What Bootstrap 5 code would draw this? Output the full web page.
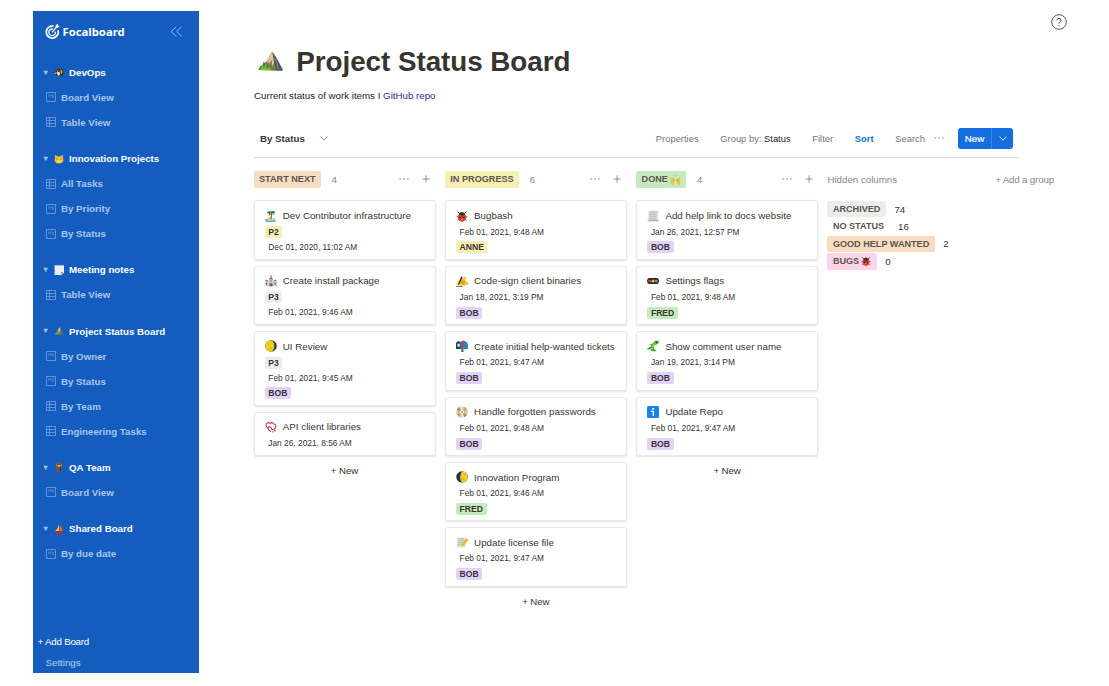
<!DOCTYPE html>
<html lang="en">
<head>
  <meta charset="UTF-8" />
  <title>Focalboard</title>
  <link href="https://cdn.jsdelivr.net/npm/bootstrap@5.3.3/dist/css/bootstrap.min.css" rel="stylesheet" />
  <style>
    body { font-family: "Liberation Sans", Arial, sans-serif; font-size: 9.73px; line-height: 15px; color: #37352f; padding: 11px 0 13px 33px; }
    svg { display: block; flex: none; }

    /* sidebar */
    .sidebar { width: 165.5px; background: #145dbf; color: #fff; }
    .brand { height: 20px; margin-top: 10.5px; padding: 0 16px 0 12px; }
    .brand-name { font: bold 11.3px/20px "Noto Sans", sans-serif; margin-left: 2.5px; }
    .board-list { margin-top: 18.4px; }
    .board-group { margin-bottom: 11.2px; }
    .board-title, .board-view { height: 25.02px; font-weight: bold; white-space: nowrap; }
    .board-title { padding-left: 10px; }
    .board-title .emoji { width: 10px; height: 10px; margin: 0 5px 0 5.5px; }
    .board-view { padding-left: 12.5px; color: #a9c5ec; }
    .board-view svg { width: 10px; height: 10px; margin-right: 5.5px; color: #6f9ddb; }
    .add-board { padding-left: 4.5px; height: 23px; letter-spacing: -.2px; }
    .settings { padding-left: 12.5px; height: 20.5px; color: #b7ceee; }

    /* page head */
    .help-row { height: 22px; padding-right: 42.5px; }
    .content-area { padding-left: 55.5px; }
    .board-head { width: 765px; }
    .page-title { height: 34px; margin-top: 11.6px; }
    .page-title svg { margin-left: 3px; }
    .page-title h1 { font-size: 27.8px; line-height: 34px; font-weight: bold; margin-left: 12.3px; letter-spacing: -.04px; }
    .about { margin-top: 9.5px; height: 15px; color: #222; }
    .about a { color: #4b11a0; }
    .toolbar { height: 38px; margin-top: 16.9px; border-bottom: 1px solid #dcdcdb; font-size: 9.4px; color: #777672; padding: 0 6px; }
    .view-name { font-size: 9.73px; color: #37352f; }
    .chev-view { margin-left: 15px; }
    .tool { margin-left: 21.7px; }
    .tool-dots { margin-left: 9px; margin-right: 14px; }
    .btn-new { width: 55px; height: 21px; background: #166de0; color: #fff; border-radius: 3px; overflow: hidden; }
    .btn-new span { width: 34px; border-right: 1px solid #3c84e6; line-height: 21px; font-size: 9.73px; -webkit-text-stroke: .2px #fff; }
    .sort { color: #0a76d0; }

    /* board */
    .board { gap: 9.3px; margin-top: 12px; margin-left: -.5px; }
    .lane { width: 182px; }
    .lane-head { height: 19px; margin-bottom: 11.5px; color: #888784; }
    .lane-count { margin-left: 10.5px; }
    .lane-plus { margin-left: 13px; margin-right: 5.5px; }
    .label-chip { height: 17px; line-height: 17px; padding: 0 5.5px; border-radius: 2px; font-weight: bold; font-size: 9.15px; color: #5a564c; white-space: nowrap; }
    .chip-emoji { margin-left: 2px; }
    .task { border: 1px solid #e8e8e8; border-radius: 2.5px; box-shadow: 0 1px 2px rgba(0, 0, 0, .12); margin-bottom: 6px; padding: 5.2px 4px 3.8px 10.3px; background: #fff; }
    .task-name { height: 17.8px; font-size: 9.78px; white-space: nowrap; }
    .task-name svg { width: 12px; height: 12px; margin-right: 6px; }
    .prop { height: 15.3px; font-size: 8.36px; }
    .prop-date { padding-left: 3.5px; color: #333; }
    .tag-chip { height: 12px; line-height: 12px; padding: 0 3.5px; border-radius: 2px; font-weight: bold; font-size: 8.6px; }
    .add-task { height: 17px; line-height: 17px; color: #333; letter-spacing: -.1px; }
    .bg-orange-soft { background: #f8dcc1; }
    .bg-yellow-soft { background: #f7eeb4; }
    .bg-green-soft { background: #c6eac0; }
    .bg-purple-soft { background: #e3d0fb; }
    .bg-gray-soft { background: #ececec; }
    .bg-pink-soft { background: #ffd3e8; }
    .hidden-lane { width: 226.5px; }
    .add-group { letter-spacing: -.17px; }
    .hidden-row { height: 17.4px; color: #333; }
    .hidden-row .label-chip { height: 16.5px; line-height: 16.5px; margin-right: 8.5px; font-size: 9.1px; }
  </style>
</head>
<body class="vh-100 overflow-hidden bg-white">

  <!-- icon sprite -->
  <svg width="0" height="0" class="position-absolute">
    <symbol id="i-board" viewBox="0 0 10 10"><path d="M.5.5h9v9h-9zM3 2.400v2.600M5 2.400v1.900M7 2.400v3.600" fill="none" stroke="currentColor" stroke-width=".85"/></symbol>
    <symbol id="i-table" viewBox="0 0 10 10"><path d="M.5.5h9v9h-9zM.5 3.500h9M.5 6.500h9M3.500.5v9" fill="none" stroke="currentColor" stroke-width=".85"/></symbol>
    <symbol id="i-tri" viewBox="0 0 6 6"><path d="M.4.8h5.2L3 5.6z" fill="#9fbde9"/></symbol>
    <symbol id="i-dots" viewBox="0 0 10 4"><path d="M.5 2h1.4M4.3 2h1.4M8.1 2h1.4" stroke="#777" stroke-width="1.2"/></symbol>
    <symbol id="i-plus" viewBox="0 0 8 8"><path d="M4 .4v7.2M.4 4h7.2" stroke="#777" stroke-width=".8"/></symbol>
    <symbol id="i-chev" viewBox="0 0 8 5"><path d="M.7.8 4 4.1 7.3.8" fill="none" stroke="currentColor" stroke-width=".9"/></symbol>

    <symbol id="e-camp" viewBox="0 0 28 22"><path d="M2 20 8 12l2-1 5-10 2 1 3 5 6 11 1 2z" fill="#8d7459"/><path d="m15 1-5 10 3 2 2-4 1 7 4-8-3-6z" fill="#e8c794"/><path d="m16 1 4 6 7 13h-7l-2-7-1-5z" fill="#4d5360"/><path d="m18 7 3 6 1 6M12 9l-2 8" stroke="#8598b3" fill="none"/><path d="m1 20 3-5 1 1 2-5 2 4 2-2 2 5 3-1 3 3 6-1 2 2z" fill="#438b2c"/><path d="m3 20 3-5 1 3 2-5 1 5 3-1 2 3z" fill="#78b83d"/></symbol>
    <symbol id="e-dog" viewBox="0 0 16 16"><path d="M0 10 4 5q5-5 10-1 3 5 0 9l-3 1-5-1-5-1z" fill="#3d2b25"/><path d="M5 6h3l2 6-3 2-2-3z" fill="#eee4d5"/><path d="M10 4q4 0 4 5l-3 3z" fill="#c78a45"/><circle cx="7" cy="7" r="1.100" fill="#111"/><path d="m0 10 4-2v3H1z" fill="#eba345"/></symbol>
    <symbol id="e-cat" viewBox="0 0 16 16"><path d="m2 1 4 3h4l4-3 1 10q-2 4-7 4t-7-4z" fill="#f8c630"/><path d="m3 3 2 2-2 1zm10 0-2 2 2 1z" fill="#e9803c"/><circle cx="5" cy="8" r=".9" fill="#7b5a12"/><circle cx="11" cy="8" r=".9" fill="#7b5a12"/><path d="M5 12q3-3 6 0-3 2-6 0" fill="#ffe79a"/></symbol>
    <symbol id="e-note" viewBox="0 0 16 16"><path d="M1 0h15v12l-4 4H1z" fill="#e9edf0"/><path d="M1 0h15v1.500H1z" fill="#aab3bb"/><path d="M11 15v-4h4z" fill="#89929b"/></symbol>
    <symbol id="e-owl" viewBox="0 0 16 16"><path d="M4 1h7l2 5-1 7-3 3H6L3 11z" fill="#875536"/><path d="M4 3h8v3L8 8 4 6z" fill="#d5a36f"/><circle cx="6" cy="4" r="1.2" fill="#222"/><circle cx="10" cy="4" r="1.2" fill="#222"/><path d="M9 8h3l-1 5-2 2z" fill="#57321f"/></symbol>
    <symbol id="e-boat" viewBox="0 0 16 16"><path d="M8 0v11H2Q7 7 8 0" fill="#f8c231"/><path d="M9 2q5 5 5 9H9z" fill="#ef6a27"/><path d="M1 12h14l-3 4H4z" fill="#c62a21"/></symbol>
    <symbol id="e-island" viewBox="0 0 16 16"><path d="M0 12h14v4H1z" fill="#48c4df"/><path d="M2 11q5-3 11 1l-2 2H4z" fill="#f2cf78"/><path d="m8 4-1 8 2 .2L9.5 4" fill="#9a6538"/><path d="M2 5Q4 0 8 2q5-3 6 3l-3-1 1 4-3-4-4 4V4z" fill="#32903a"/></symbol>
    <symbol id="e-castle" viewBox="0 0 16 16"><path d="M0 8h5V6h6v2h5v7H0z" fill="#c9ccd4"/><path d="m5 6 3-4 3 4zM0 8l2-2 3 2zM11 8l3-2 2 2z" fill="#6d7785"/><path d="M8 0v3" stroke="#c33"/><path d="M6 11h4v4H6z" fill="#9b493e"/><path d="M2 10v3M13.5 10v3M8 7v2" stroke="#714e6e" stroke-width="1.3"/></symbol>
    <symbol id="e-moon" viewBox="0 0 16 16"><circle cx="8" cy="8" r="7.7" fill="#27364b"/><path d="M8 .3a7.7 7.7 0 0 0 0 15.4q4.500-2 4.500-7.700T8 .3" fill="#f8cb19"/><circle cx="5" cy="5" r="1.5" fill="#e8b913"/><circle cx="7" cy="11" r="1.8" fill="#e8b913"/></symbol>
    <symbol id="e-moon2" viewBox="0 0 16 16"><circle cx="8" cy="8" r="7.7" fill="#22344e"/><path d="M8 .3a7.7 7.7 0 0 1 0 15.4Q5 12 5.5 8T8 .3" fill="#f8cb2a"/><circle cx="11" cy="5" r="1.4" fill="#e8b913"/><circle cx="9" cy="11" r="1.6" fill="#e8b913"/></symbol>
    <symbol id="e-horn" viewBox="0 0 16 16"><path d="M4 9Q0 7 2 4t5-1q3-2 5 1 4 1 2 5-1 3-5 2-1-4-4-3-2 2 0 4l3 2" fill="none" stroke="#c4314b" stroke-width="1.4"/><path d="M10 14h5l-2-3z" fill="#a9895f"/><path d="m9 14 2 1" stroke="#555"/></symbol>
    <symbol id="e-bug" viewBox="0 0 16 16"><path d="m2 2 3 3M14 2l-3 3M1 9h14M2 14l3-3M14 14l-3-3" stroke="#4a2b23" stroke-width="1.2"/><ellipse cx="8" cy="9.5" rx="5.5" ry="6" fill="#d8432a"/><path d="M4 5q4-5 8 0l-1 2H5z" fill="#38302f"/><path d="M8 6v9" stroke="#5a1711" stroke-width=".7"/><circle cx="5.5" cy="10" r="1.1" fill="#3c1a16"/><circle cx="10.5" cy="10" r="1.1" fill="#3c1a16"/><circle cx="8" cy="12.5" r="1.2" fill="#e99b45"/></symbol>
    <symbol id="e-write" viewBox="0 0 16 16"><path d="M1 12 3 8l5-2 4-4 2 1-2 4 4 3v3l-5 1H3z" fill="#fbc02c"/><path d="m6 8 6 1-5 1 4 1.500-4 .5" fill="none" stroke="#c5830d" stroke-width=".8"/><path d="M7 1.500 4 9l-2 5 3-3 4-8z" fill="#3b3530"/><path d="M0 15.200h9" stroke="#444"/></symbol>
    <symbol id="e-mailbox" viewBox="0 0 16 16"><path d="M7 10h3v6H7z" fill="#7a5b43"/><path d="M1 3q2-2 4-1h8q3 1 3 5v5H1z" fill="#2a85b8"/><path d="M0 12V5q0-3 3-3t3 3v7z" fill="#243f5c"/><path d="M2 5h3v4H2z" fill="#e7edf0"/><path d="M8 1h4v3h-2v5H8z" fill="#dd3834"/></symbol>
    <symbol id="e-disc" viewBox="0 0 16 16"><circle cx="8" cy="8" r="7.5" fill="#d7c4a1"/><path d="m8 8-7-3 3-4zM8 8l7 4-4 3z" fill="#8d9867"/><path d="m8 8 4-7 3 4zM8 8l-4 7-3-4z" fill="#dba052"/><path d="M8 8 5 .7h4zM8 8l3 7H7z" fill="#eee7d7"/><circle cx="8" cy="8" r="2.6" fill="#fff"/><circle cx="8" cy="8" r="1.2" fill="#b57d60"/></symbol>
    <symbol id="e-memo" viewBox="0 0 16 16"><path d="M1 2h12v13H1z" fill="#dcdfe2"/><path d="M3 4h8M3 6.500h7M3 9h5M3 11.500h3" stroke="#9da3a8" stroke-width=".9"/><path d="m7 11 6-7 3 2-6 7-3 1z" fill="#f3b522"/><path d="m13 4 1-1 2 2v1z" fill="#e46c75"/></symbol>
    <symbol id="e-scroll" viewBox="0 0 16 16"><path d="M2 1h13l-1 11 1 3H0l2-3z" fill="#d2d4d5"/><path d="M4 3.500h8M4 6h8M4 8.500h8M4 11h7" stroke="#bcbfc1" stroke-width=".9"/><path d="M0 15q3 0 3-2h12v2z" fill="#aeb1b3"/></symbol>
    <symbol id="e-light" viewBox="0 0 16 16"><rect x=".2" y="4" width="15.6" height="8" rx="3" fill="#27262a"/><circle cx="3.7" cy="8" r="2" fill="#e43a31"/><circle cx="8" cy="8" r="2" fill="#f3bd2d"/><circle cx="12.3" cy="8" r="2" fill="#36b852"/></symbol>
    <symbol id="e-lizard" viewBox="0 0 16 16"><path d="M16 1h-5L7 5 4 6l2 2-5 3-1 2 5-1 1 3h7l-4-4 1-4 5-2z" fill="#3fa231"/><path d="m7 6 6-4-4 6-1 4-5 1 4-3z" fill="#8fd851"/><circle cx="12.5" cy="3" r=".9" fill="#163d14"/></symbol>
    <symbol id="e-info" viewBox="0 0 16 16"><rect width="16" height="16" rx="2" fill="#1683ec"/><circle cx="8.200" cy="3.800" r="1.500" fill="#fff"/><path d="M5 7.200h3.400v6" fill="none" stroke="#fff" stroke-width="1.700"/></symbol>
    <symbol id="e-hands" viewBox="0 0 16 16"><path d="M1 5l2 1 2-1 1 6-1 5H2l-1-4zM15 5l-2 1-2-1-1 6 1 5h3l1-4z" fill="#f6c12f"/><path d="m5 6 2 3-2 3zm6 0-2 3 2 3z" fill="#e39d21"/><path d="m4 2 1 1M8 1v2M12 2l-1 1" stroke="#9db68a" stroke-width="1.2"/></symbol>
  </svg>

  <div class="d-flex h-100">
    <aside class="sidebar d-flex flex-column flex-shrink-0">
      <div class="brand d-flex align-items-center">
        <svg width="15" height="17" viewBox="0 0 15 17" fill="none" stroke="#fff"><path d="M8.500 3.200A6 6 0 1 0 13 7.300" stroke-width="1.800"/><path d="M7.800 6.100a3.300 3.300 0 1 0 2.500 2.500" stroke-width="1.300"/><path d="M7 9.300 12.300 3" stroke-width="1.200"/><path d="m10.500 4.800.2-2.200 2-2 .3 1.900 1.700.4-2 2z" fill="#fff" stroke="none"/></svg>
        <span class="brand-name">Focalboard</span>
        <svg class="ms-auto" width="13" height="11" viewBox="0 0 13 11" fill="none" stroke="#a9c5ec" stroke-width=".9"><path d="M6.300.6 1.200 5.500l5.100 4.900M11.800.6 6.700 5.500l5.100 4.900"/></svg>
      </div>

      <div class="board-list">
        <div class="board-group">
          <div class="board-title d-flex align-items-center"><svg width="5.500" height="5.500"><use href="#i-tri"/></svg><svg class="emoji"><use href="#e-dog"/></svg>DevOps</div>
          <div class="board-view d-flex align-items-center"><svg><use href="#i-board"/></svg>Board View</div>
          <div class="board-view d-flex align-items-center"><svg><use href="#i-table"/></svg>Table View</div>
        </div>
        <div class="board-group">
          <div class="board-title d-flex align-items-center"><svg width="5.500" height="5.500"><use href="#i-tri"/></svg><svg class="emoji"><use href="#e-cat"/></svg>Innovation Projects</div>
          <div class="board-view d-flex align-items-center"><svg><use href="#i-table"/></svg>All Tasks</div>
          <div class="board-view d-flex align-items-center"><svg><use href="#i-board"/></svg>By Priority</div>
          <div class="board-view d-flex align-items-center"><svg><use href="#i-board"/></svg>By Status</div>
        </div>
        <div class="board-group">
          <div class="board-title d-flex align-items-center"><svg width="5.500" height="5.500"><use href="#i-tri"/></svg><svg class="emoji"><use href="#e-note"/></svg>Meeting notes</div>
          <div class="board-view d-flex align-items-center"><svg><use href="#i-table"/></svg>Table View</div>
        </div>
        <div class="board-group">
          <div class="board-title d-flex align-items-center"><svg width="5.500" height="5.500"><use href="#i-tri"/></svg><svg class="emoji"><use href="#e-camp"/></svg>Project Status Board</div>
          <div class="board-view d-flex align-items-center"><svg><use href="#i-board"/></svg>By Owner</div>
          <div class="board-view d-flex align-items-center"><svg><use href="#i-board"/></svg>By Status</div>
          <div class="board-view d-flex align-items-center"><svg><use href="#i-table"/></svg>By Team</div>
          <div class="board-view d-flex align-items-center"><svg><use href="#i-table"/></svg>Engineering Tasks</div>
        </div>
        <div class="board-group">
          <div class="board-title d-flex align-items-center"><svg width="5.500" height="5.500"><use href="#i-tri"/></svg><svg class="emoji"><use href="#e-owl"/></svg>QA Team</div>
          <div class="board-view d-flex align-items-center"><svg><use href="#i-board"/></svg>Board View</div>
        </div>
        <div class="board-group">
          <div class="board-title d-flex align-items-center"><svg width="5.500" height="5.500"><use href="#i-tri"/></svg><svg class="emoji"><use href="#e-boat"/></svg>Shared Board</div>
          <div class="board-view d-flex align-items-center"><svg><use href="#i-board"/></svg>By due date</div>
        </div>
      </div>

      <div class="add-board d-flex align-items-center mt-auto">+ Add Board</div>
      <div class="settings d-flex align-items-center">Settings</div>
    </aside>

    <main class="flex-grow-1">
      <div class="help-row d-flex justify-content-end align-items-center">
        <svg width="16" height="16" viewBox="0 0 16 16" fill="none" stroke="#444" stroke-width=".9"><circle cx="8" cy="8" r="7.300"/><path d="M5.900 6.300Q6 4.300 8 4.300t2.100 1.900Q10.100 7.200 9 7.900T8 9.700"/><path d="M8 11v1.200"/></svg>
      </div>

      <div class="content-area">
        <div class="board-head">
          <div class="page-title d-flex align-items-center">
            <svg width="27" height="21"><use href="#e-camp"/></svg>
            <h1 class="mb-0">Project Status Board</h1>
          </div>
          <div class="about">Current status of work items I <a href="#" class="text-decoration-none">GitHub repo</a></div>
          <div class="toolbar d-flex align-items-center">
            <b class="view-name">By Status</b>
            <svg class="chev-view" width="8" height="5"><use href="#i-chev"/></svg>
            <span class="ms-auto">Properties</span>
            <span class="tool">Group by: <span class="text-dark">Status</span></span>
            <span class="tool">Filter</span>
            <b class="tool sort">Sort</b>
            <span class="tool">Search</span>
            <svg class="tool-dots" width="10" height="4"><use href="#i-dots"/></svg>
            <div class="btn-new d-flex align-items-center">
              <span class="text-center">New</span>
              <svg class="mx-auto" width="8" height="5"><use href="#i-chev"/></svg>
            </div>
          </div>
        </div>

        <div class="board d-flex align-items-start">
          <section class="lane">
            <div class="lane-head d-flex align-items-center">
              <span class="label-chip bg-orange-soft">START NEXT</span><span class="lane-count">4</span>
              <svg class="ms-auto" width="10" height="4"><use href="#i-dots"/></svg><svg class="lane-plus" width="8" height="8"><use href="#i-plus"/></svg>
            </div>
            <div class="task">
              <div class="task-name d-flex align-items-center"><svg><use href="#e-island"/></svg>Dev Contributor infrastructure</div>
              <div class="prop d-flex align-items-center"><span class="tag-chip bg-yellow-soft">P2</span></div>
              <div class="prop prop-date d-flex align-items-center">Dec 01, 2020, 11:02 AM</div>
            </div>
            <div class="task">
              <div class="task-name d-flex align-items-center"><svg><use href="#e-castle"/></svg>Create install package</div>
              <div class="prop d-flex align-items-center"><span class="tag-chip bg-gray-soft">P3</span></div>
              <div class="prop prop-date d-flex align-items-center">Feb 01, 2021, 9:46 AM</div>
            </div>
            <div class="task">
              <div class="task-name d-flex align-items-center"><svg><use href="#e-moon"/></svg>UI Review</div>
              <div class="prop d-flex align-items-center"><span class="tag-chip bg-gray-soft">P3</span></div>
              <div class="prop prop-date d-flex align-items-center">Feb 01, 2021, 9:45 AM</div>
              <div class="prop d-flex align-items-center"><span class="tag-chip bg-purple-soft">BOB</span></div>
            </div>
            <div class="task">
              <div class="task-name d-flex align-items-center"><svg><use href="#e-horn"/></svg>API client libraries</div>
              <div class="prop prop-date d-flex align-items-center">Jan 26, 2021, 8:56 AM</div>
            </div>
            <div class="add-task text-center">+ New</div>
          </section>

          <section class="lane">
            <div class="lane-head d-flex align-items-center">
              <span class="label-chip bg-yellow-soft">IN PROGRESS</span><span class="lane-count">6</span>
              <svg class="ms-auto" width="10" height="4"><use href="#i-dots"/></svg><svg class="lane-plus" width="8" height="8"><use href="#i-plus"/></svg>
            </div>
            <div class="task">
              <div class="task-name d-flex align-items-center"><svg><use href="#e-bug"/></svg>Bugbash</div>
              <div class="prop prop-date d-flex align-items-center">Feb 01, 2021, 9:48 AM</div>
              <div class="prop d-flex align-items-center"><span class="tag-chip bg-yellow-soft">ANNE</span></div>
            </div>
            <div class="task">
              <div class="task-name d-flex align-items-center"><svg><use href="#e-write"/></svg>Code-sign client binaries</div>
              <div class="prop prop-date d-flex align-items-center">Jan 18, 2021, 3:19 PM</div>
              <div class="prop d-flex align-items-center"><span class="tag-chip bg-purple-soft">BOB</span></div>
            </div>
            <div class="task">
              <div class="task-name d-flex align-items-center"><svg><use href="#e-mailbox"/></svg>Create initial help-wanted tickets</div>
              <div class="prop prop-date d-flex align-items-center">Feb 01, 2021, 9:47 AM</div>
              <div class="prop d-flex align-items-center"><span class="tag-chip bg-purple-soft">BOB</span></div>
            </div>
            <div class="task">
              <div class="task-name d-flex align-items-center"><svg><use href="#e-disc"/></svg>Handle forgotten passwords</div>
              <div class="prop prop-date d-flex align-items-center">Feb 01, 2021, 9:48 AM</div>
              <div class="prop d-flex align-items-center"><span class="tag-chip bg-purple-soft">BOB</span></div>
            </div>
            <div class="task">
              <div class="task-name d-flex align-items-center"><svg><use href="#e-moon2"/></svg>Innovation Program</div>
              <div class="prop prop-date d-flex align-items-center">Feb 01, 2021, 9:46 AM</div>
              <div class="prop d-flex align-items-center"><span class="tag-chip bg-green-soft">FRED</span></div>
            </div>
            <div class="task">
              <div class="task-name d-flex align-items-center"><svg><use href="#e-memo"/></svg>Update license file</div>
              <div class="prop prop-date d-flex align-items-center">Feb 01, 2021, 9:47 AM</div>
              <div class="prop d-flex align-items-center"><span class="tag-chip bg-purple-soft">BOB</span></div>
            </div>
            <div class="add-task text-center">+ New</div>
          </section>

          <section class="lane">
            <div class="lane-head d-flex align-items-center">
              <span class="label-chip bg-green-soft d-flex align-items-center">DONE<svg class="chip-emoji" width="11" height="11"><use href="#e-hands"/></svg></span><span class="lane-count">4</span>
              <svg class="ms-auto" width="10" height="4"><use href="#i-dots"/></svg><svg class="lane-plus" width="8" height="8"><use href="#i-plus"/></svg>
            </div>
            <div class="task">
              <div class="task-name d-flex align-items-center"><svg><use href="#e-scroll"/></svg>Add help link to docs website</div>
              <div class="prop prop-date d-flex align-items-center">Jan 26, 2021, 12:57 PM</div>
              <div class="prop d-flex align-items-center"><span class="tag-chip bg-purple-soft">BOB</span></div>
            </div>
            <div class="task">
              <div class="task-name d-flex align-items-center"><svg><use href="#e-light"/></svg>Settings flags</div>
              <div class="prop prop-date d-flex align-items-center">Feb 01, 2021, 9:48 AM</div>
              <div class="prop d-flex align-items-center"><span class="tag-chip bg-green-soft">FRED</span></div>
            </div>
            <div class="task">
              <div class="task-name d-flex align-items-center"><svg><use href="#e-lizard"/></svg>Show comment user name</div>
              <div class="prop prop-date d-flex align-items-center">Jan 19, 2021, 3:14 PM</div>
              <div class="prop d-flex align-items-center"><span class="tag-chip bg-purple-soft">BOB</span></div>
            </div>
            <div class="task">
              <div class="task-name d-flex align-items-center"><svg><use href="#e-info"/></svg>Update Repo</div>
              <div class="prop prop-date d-flex align-items-center">Feb 01, 2021, 9:47 AM</div>
              <div class="prop d-flex align-items-center"><span class="tag-chip bg-purple-soft">BOB</span></div>
            </div>
            <div class="add-task text-center">+ New</div>
          </section>

          <section class="hidden-lane">
            <div class="lane-head d-flex align-items-center justify-content-between"><span>Hidden columns</span><span class="add-group">+ Add a group</span></div>
            <div class="hidden-row d-flex align-items-center"><span class="label-chip bg-gray-soft">ARCHIVED</span>74</div>
            <div class="hidden-row d-flex align-items-center"><span class="label-chip">NO STATUS</span>16</div>
            <div class="hidden-row d-flex align-items-center"><span class="label-chip bg-orange-soft">GOOD HELP WANTED</span>2</div>
            <div class="hidden-row d-flex align-items-center"><span class="label-chip bg-pink-soft d-flex align-items-center">BUGS<svg class="chip-emoji" width="10" height="10"><use href="#e-bug"/></svg></span>0</div>
          </section>
        </div>
      </div>
    </main>
  </div>

  <script src="https://cdn.jsdelivr.net/npm/bootstrap@5.3.3/dist/js/bootstrap.bundle.min.js"></script>
</body>
</html>
